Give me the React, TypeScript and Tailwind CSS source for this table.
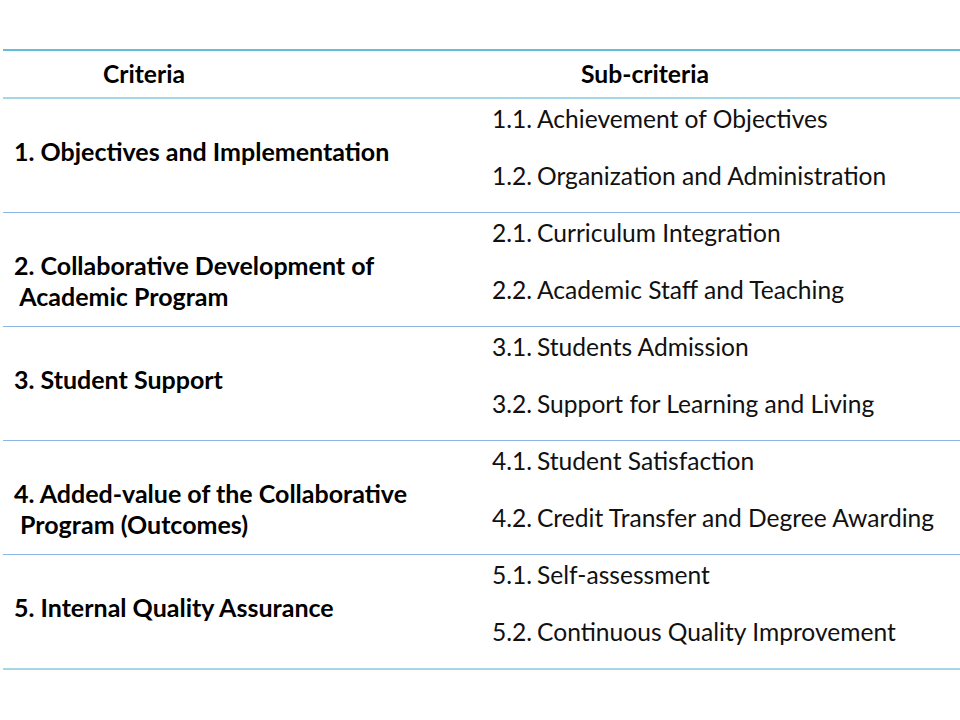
import React from "react";

const rows: { crit: string[]; subs: [string, string][] }[] = [
  {
    crit: ["1. Objectives and Implementation"],
    subs: [
      ["1.1.", "Achievement of Objectives"],
      ["1.2.", "Organization and Administration"],
    ],
  },
  {
    crit: ["2. Collaborative Development of", "\u00a0Academic Program"],
    subs: [
      ["2.1.", "Curriculum Integration"],
      ["2.2.", "Academic Staff and Teaching"],
    ],
  },
  {
    crit: ["3. Student Support"],
    subs: [
      ["3.1.", "Students Admission"],
      ["3.2.", "Support for Learning and Living"],
    ],
  },
  {
    crit: ["4. Added-value of the Collaborative", "\u00a0Program (Outcomes)"],
    subs: [
      ["4.1.", "Student Satisfaction"],
      ["4.2.", "Credit Transfer and Degree Awarding"],
    ],
  },
  {
    crit: ["5. Internal Quality Assurance"],
    subs: [
      ["5.1.", "Self-assessment"],
      ["5.2.", "Continuous Quality Improvement"],
    ],
  },
];

export default function App() {
  return (
    <div
      className="w-[960px] h-[720px] bg-white pt-[49px] pl-[3px] text-black"
      style={{ fontFamily: "Lato, 'Open Sans', sans-serif" }}
    >
      <div className="border-t-2 border-[#62bfd7]">
        <div className="flex h-[48px] items-center border-b-2 border-[#a3d7e6] text-[24.7px] font-bold">
          <div className="w-[282px] text-center">Criteria</div>
          <div className="flex-1 ml-[45px] text-center">Sub-criteria</div>
        </div>
        {rows.map((r, i) => (
          <div
            key={i}
            className={
              i === rows.length - 1
                ? "flex h-[115px] border-b-2 border-[#a3d7e6]"
                : "flex h-[114px] border-b border-[#8db5e6]"
            }
          >
            <div className="w-[477px] pl-[11px] pt-[37px] text-[25px] font-bold leading-[31px]">
              {r.crit.map((c, j) => (
                <div key={j} className="whitespace-pre">{c}</div>
              ))}
            </div>
            <div className="flex-1 pl-[12px] pt-[5px] flex flex-col gap-[27px] text-[24.6px] leading-[30px] text-[#111]">
              {r.subs.map(([n, t], j) => (
                <div key={j} className="flex">
                  <span className="w-[45px]">{n}</span>
                  <span>{t}</span>
                </div>
              ))}
            </div>
          </div>
        ))}
      </div>
    </div>
  );
}
